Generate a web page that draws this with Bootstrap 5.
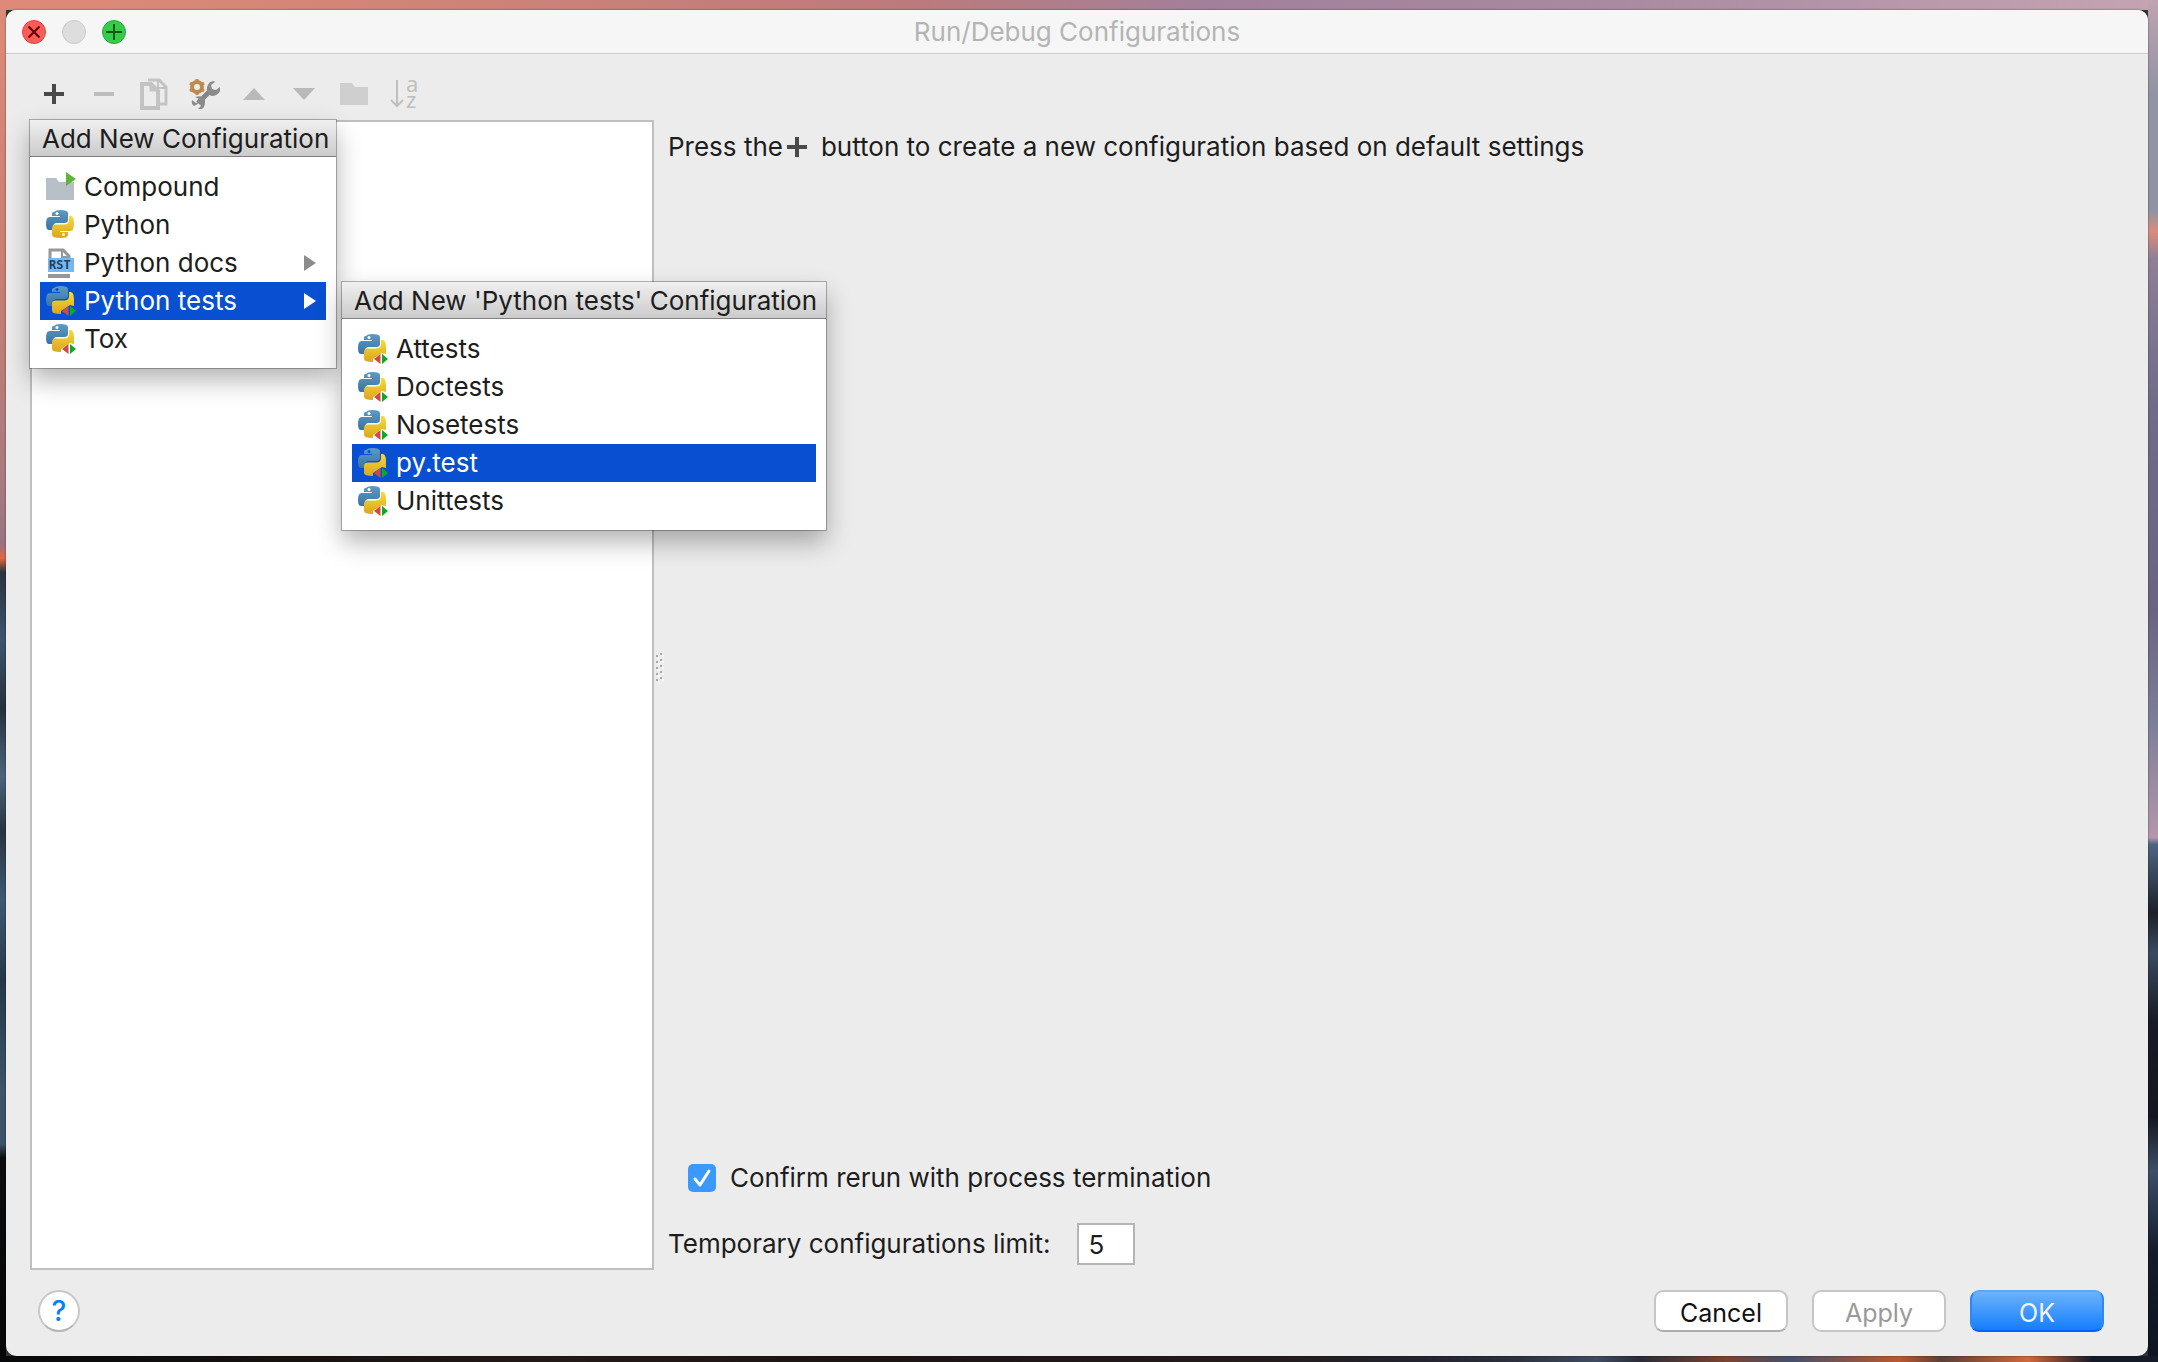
<!DOCTYPE html>
<html lang="en">
<head>
<meta charset="utf-8">
<meta name="viewport" content="width=device-width, initial-scale=1">
<title>Run/Debug Configurations</title>
<link href="https://cdn.jsdelivr.net/npm/bootstrap@5.3.0/dist/css/bootstrap.min.css" rel="stylesheet">
<style>
:root{--ui-text:#1d1d1d;--ui-line:#bfbfbf;--ui-select:#084fd1}
body{
  font-family:Inter,"Noto Sans",sans-serif;font-size:26px;line-height:30px;color:var(--ui-text);
  min-height:100vh;padding:10px 10px 6px 6px;
  background:
    linear-gradient(90deg,#08090c 0,#15110f 12%,#241a18 26%,#1c1514 40%,#241b1b 58%,#23242f 66%,#2c2f3c 70%,#3f4b60 74%,#2a2c38 76%,#7a4431 80%,#45506a 83%,#b9592f 88%,#5a4038 90%,#d0683c 94%,#141a28 97%) bottom/100% 6px no-repeat,
    linear-gradient(180deg,#df8a78 0,#c97f72 20%,#a67a80 36%,#9a7380 40%,#e0663f 41%,#2b3340 42%,#3c556c 47%,#26303c 52%,#4c647c 57%,#2a3340 61%,#3d5a72 66%,#26384a 72%,#3c5468 80%,#3c5468 84%,#0b0c0e 85%,#060606 100%) left/6px 100% no-repeat,
    linear-gradient(180deg,#c0a3b0 0,#9094a4 7%,#8f93a3 15.5%,#d98c7c 17%,#8d7f96 19%,#6f6b88 30%,#6a6482 45%,#7d7e98 53%,#b396ab 61.5%,#4d6480 62%,#3a4b60 64%,#1e2028 67%,#3a4a60 70%,#191b24 75%,#15171f 82%,#3c4e68 86%,#141b2a 92%,#0f1420 100%) right/10px 100% no-repeat,
    linear-gradient(90deg,#df8a78 0,#cf8478 20%,#bd7a7c 42%,#a2809a 56%,#a98aa0 75%,#c5a4b2 100%) top/100% 10px no-repeat,#333}
.app-window{background:#ececec;border-radius:10px;box-shadow:0 0 2px rgba(0,0,0,.6)}
.title-strip{height:44px;background:#f6f6f6;border-bottom:1px solid #cbcbcb;border-radius:10px 10px 0 0;padding:0 16px}
.window-title{font-size:26px;color:#b4b4b4;font-weight:400;line-height:30px}
.light{width:24px;height:24px;border:0;padding:0;background:none}
.light svg{display:block}
.lights{gap:16px;width:200px}
.tool-strip{padding:14px 24px 0;gap:2px;height:66px}
.tool-strip .tool-btn{width:48px;height:52px;border:0;padding:0;background:none;display:flex;align-items:center;justify-content:center}
.main-split{padding-left:24px}
.config-list{width:624px;background:#fff;border:2px solid var(--ui-line)}
.splitter{width:14px;padding-bottom:54px}
.popup{position:absolute;background:#fff;z-index:10;box-shadow:0 0 0 1px rgba(0,0,0,.28),0 12px 24px rgba(0,0,0,.3);color:var(--ui-text)}
.popup-main{top:-2px;left:-2px;width:306px;height:248px}
.popup-sub{top:0;left:calc(100% + 16px);width:484px;height:248px}
.popup-title{height:37px;padding-left:12px;line-height:38px;font-size:26px;font-weight:400;white-space:nowrap;background:linear-gradient(#f0f0f0,#cbcbcb);border-bottom:1px solid #7f7f7f}
.popup-items{padding:11px 10px 10px}
.popup-items>li{position:relative}
.entry{display:flex;align-items:center;height:38px;padding:0 10px 0 6px;color:inherit;text-decoration:none}
.entry>.entry-icon{width:30px;height:30px;margin-right:8px;flex:none}
.entry.chosen{background:var(--ui-select);color:#fff}
.pane{padding:12px 24px 5px 0}
.hint-plus{margin:0 14px 0 4px}
.confirm-row{padding-left:20px;gap:14px;margin-bottom:30px}
.confirm-row .form-check-input{width:28px;height:28px;margin:0;border:0;border-radius:5px}
.confirm-row .form-check-input:checked{background-color:#3b99fc;background-size:28px;background-image:url("data:image/svg+xml,%3Csvg xmlns='http://www.w3.org/2000/svg' viewBox='0 0 28 28'%3E%3Cpath d='M7 15l5 6L21 7' fill='none' stroke='%23fff' stroke-width='3' stroke-linecap='round' stroke-linejoin='round'/%3E%3C/svg%3E")}
.limit-row{gap:26px}
.limit-input{width:58px;height:42px;border:2px solid #b5b5b5;border-radius:0;padding:0 10px;font-size:26px;line-height:30px;color:#1d1d1d}
.foot{padding:20px 44px 24px 32px}
.help-btn{width:42px;height:42px;border-radius:50%;border:2px solid #c8c8c8;border-bottom-color:#b4b4b4;background:#fff;color:#0a7cff;font-size:28px;line-height:36px;padding:0;font-weight:500}
.foot-actions{gap:24px}
.dlg-btn{width:134px;height:42px;border-radius:9px;border:2px solid #c6c6c6;border-bottom-color:#adadad;background:#fff;font-size:25px;line-height:30px;padding:6px 0 2px;color:#111}
.dlg-btn:disabled{background:#fff;color:#9a9a9a;opacity:1;border-color:#c6c6c6}
.dlg-btn.go{color:#f3f3fa;border-color:#5aa8f8 #2f86f5 #0a60ff;background:linear-gradient(#6cb3fa,#147efe)}
</style>
</head>
<body class="d-flex flex-column">

<svg width="0" height="0" class="position-absolute" aria-hidden="true">
  <defs>
    <linearGradient id="blueFill" x1="0" y1="0" x2="0" y2="1"><stop offset="0" stop-color="#5b9bc4"/><stop offset="1" stop-color="#3b74a3"/></linearGradient>
    <linearGradient id="goldFill" x1="0" y1="0" x2="0" y2="1"><stop offset="0" stop-color="#f5dc35"/><stop offset="1" stop-color="#dba51f"/></linearGradient>
    <symbol id="py" viewBox="0 0 30 30">
      <path fill="url(#blueFill)" d="M9 1.500Q9.500 0 14 0Q22 0 22 3V10Q22 13 18 13H11Q7 13 7 17V20H3Q0 20 0 14Q0 7 3.500 7H14V6H6V3Q6 2 9 1.500Z"/>
      <path fill="url(#goldFill)" d="M23 6H25Q28 7 28 13Q28 20 25 21H14V22H22V25Q22 28 14.500 28Q6 28 6 25V18Q6 14.500 10 14.500H18Q23 14.500 23 10Z"/>
      <circle cx="11" cy="3.500" r="1.500" fill="#fff"/><circle cx="17.500" cy="24.500" r="1.500" fill="#fff" opacity=".85"/>
    </symbol>
    <symbol id="pytest" viewBox="0 0 30 30">
      <path fill="url(#blueFill)" d="M9 1.500Q9.500 0 14 0Q22 0 22 3V10Q22 13 18 13H11Q7 13 7 17V20H3Q0 20 0 14Q0 7 3.500 7H14V6H6V3Q6 2 9 1.500Z"/>
      <path fill="url(#goldFill)" d="M23 6H25Q28 7 28 13V20L24 19L15 25V28Q6 28 6 25V18Q6 14.500 10 14.500H18Q23 14.500 23 10Z"/>
      <circle class="eye" cx="11" cy="3.500" r="1.500" fill="currentColor"/>
      <path fill="#cf4a45" d="M22.500 20V30L16 25Z"/><path fill="#0aaa22" d="M24 20V30L30 25Z"/>
    </symbol>
  </defs>
</svg>

<main class="app-window d-flex flex-column flex-grow-1">
  <header class="title-strip d-flex align-items-center">
    <div class="lights d-flex">
      <button class="light" aria-label="Close"><svg width="24" height="24"><circle cx="12" cy="12" r="11.500" fill="#fc5b57" stroke="#e2443f"/><path d="M6.500 6.500l11 11M17.500 6.500l-11 11" stroke="#5e0605" stroke-width="2"/></svg></button>
      <button class="light" aria-label="Minimize" disabled><svg width="24" height="24"><circle cx="12" cy="12" r="11.500" fill="#dddddd" stroke="#cbcbcb"/></svg></button>
      <button class="light" aria-label="Zoom"><svg width="24" height="24"><circle cx="12" cy="12" r="11.500" fill="#35cc4b" stroke="#24ac35"/><path d="M12 4v16M4 12h16" stroke="#0a5a10" stroke-width="2"/></svg></button>
    </div>
    <h1 class="window-title flex-grow-1 text-center m-0">Run/Debug Configurations</h1>
    <div class="lights"></div>
  </header>

  <div class="tool-strip d-flex" role="toolbar" aria-label="Configurations">
    <button class="tool-btn" aria-label="Add"><svg width="20" height="20"><path d="M10 0v20M0 10h20" stroke="#4a4a4a" stroke-width="4"/></svg></button>
    <button class="tool-btn" aria-label="Remove" disabled><svg width="20" height="20"><path d="M0 10h20" stroke="#bdbdbd" stroke-width="4"/></svg></button>
    <button class="tool-btn" aria-label="Copy" disabled><svg width="28" height="32"><g fill="none" stroke="#c3c3c3" stroke-width="4"><path d="M2 6h9l7 7v17H2z"/><path d="M11 5v7h7" stroke-width="3"/><path d="M8 2h11l7 7v17h-6" stroke-width="3"/><path d="M18 2v8h8" stroke-width="2"/></g></svg></button>
    <button class="tool-btn" aria-label="Edit defaults"><svg width="32" height="32" viewBox="-1 0 32 32"><path d="M9 25L23 11" stroke="#858585" stroke-width="5"/><path fill="#8b8b8b" d="M25 3L21 4Q17 8 18 14L22 18Q29 18 31 13V9L27 12L23 11L22 7L26 4ZM3 22L7 25L10 24L10 21L6 19Q12 17 16 20L16 24Q16 29 13 31H9L12 28L10 25L7 27L5 28Q2 26 3 22Z"/><circle cx="8" cy="9" r="5" fill="none" stroke="#bd8b4b" stroke-width="4"/><path d="M8 1v3M8 14v3M1 5l3 2M12 11l3 2M1 13l3-2M12 7l3-2" stroke="#bd8b4b" stroke-width="3"/></svg></button>
    <button class="tool-btn" aria-label="Move up" disabled><svg width="22" height="12"><path d="M11 0l11 12H0z" fill="#b9b9b9"/></svg></button>
    <button class="tool-btn" aria-label="Move down" disabled><svg width="22" height="12"><path d="M11 12L0 0h22z" fill="#b9b9b9"/></svg></button>
    <button class="tool-btn" aria-label="New folder" disabled><svg width="28" height="24"><path d="M0 1h12l3 4h13v18H0z" fill="#cfcfcf"/></svg></button>
    <button class="tool-btn" aria-label="Sort" disabled><svg class="overflow-visible" width="28" height="32"><path d="M7 2v26M1 22l6 6 6-6" fill="none" stroke="#bfbfbf" stroke-width="2"/><g fill="#bfbfbf" font-family="Noto Sans,sans-serif" font-size="22"><text x="16" y="14">a</text><text x="16" y="30">z</text></g></svg></button>
  </div>

  <div class="main-split d-flex flex-grow-1">
    <aside class="config-list position-relative flex-shrink-0">
      <section class="popup popup-main">
        <h2 class="popup-title m-0">Add New Configuration</h2>
        <ul class="popup-items list-unstyled m-0">
          <li><a class="entry" href="#"><svg class="entry-icon"><path d="M0 6h10l3 4h15v18H0z" fill="#b7bfc7"/><path d="M20 0v14l10-7z" fill="#5fb53c"/></svg>Compound</a></li>
          <li><a class="entry" href="#"><svg class="entry-icon"><use href="#py"/></svg>Python</a></li>
          <li><a class="entry" href="#"><svg class="entry-icon"><path d="M4 11V2h13l6 6v3" fill="none" stroke="#979797" stroke-width="3"/><path d="M16 2v7h8" fill="none" stroke="#979797" stroke-width="2"/><path d="M2 10h26v14H2z" fill="#74b9f2"/><path d="M2 26h22v4H2z" fill="#979797"/><text x="3" y="21" font-size="12" font-weight="700" font-family="DejaVu Sans Mono,monospace" fill="#24405c">RST</text></svg>Python docs<svg class="ms-auto" width="12" height="16"><path d="M0 0l12 8-12 8z" fill="#8c8c8c"/></svg></a></li>
          <li><a class="entry chosen" href="#" aria-expanded="true"><svg class="entry-icon" color="#084fd1"><use href="#pytest"/></svg>Python tests<svg class="ms-auto" width="12" height="16"><path d="M0 0l12 8-12 8z" fill="#fff"/></svg></a>
            <section class="popup popup-sub">
              <h2 class="popup-title m-0">Add New 'Python tests' Configuration</h2>
              <ul class="popup-items list-unstyled m-0">
                <li><a class="entry" href="#"><svg class="entry-icon" color="#fff"><use href="#pytest"/></svg>Attests</a></li>
                <li><a class="entry" href="#"><svg class="entry-icon" color="#fff"><use href="#pytest"/></svg>Doctests</a></li>
                <li><a class="entry" href="#"><svg class="entry-icon" color="#fff"><use href="#pytest"/></svg>Nosetests</a></li>
                <li><a class="entry chosen" href="#"><svg class="entry-icon" color="#084fd1"><use href="#pytest"/></svg>py.test</a></li>
                <li><a class="entry" href="#"><svg class="entry-icon" color="#fff"><use href="#pytest"/></svg>Unittests</a></li>
              </ul>
            </section>
          </li>
          <li><a class="entry" href="#"><svg class="entry-icon" color="#fff"><use href="#pytest"/></svg>Tox</a></li>
        </ul>
      </section>
    </aside>
    <div class="splitter d-flex align-items-center flex-shrink-0" role="separator" aria-orientation="vertical">
      <svg width="12" height="34"><g fill="#fafafa"><path d="M4 6h2v2h-2zM4 12h2v2h-2zM4 18h2v2h-2zM4 24h2v2h-2zM4 30h2v2h-2zM8 4h2v2h-2zM8 10h2v2h-2zM8 16h2v2h-2zM8 22h2v2h-2zM8 28h2v2h-2z"/></g><g fill="#a8a8a8"><path d="M2 4h2v2h-2zM2 10h2v2h-2zM2 16h2v2h-2zM2 22h2v2h-2zM2 28h2v2h-2zM6 2h2v2h-2zM6 8h2v2h-2zM6 14h2v2h-2zM6 20h2v2h-2zM6 26h2v2h-2z"/></g></svg>
    </div>
    <section class="pane d-flex flex-column flex-grow-1">
      <p class="d-flex align-items-center m-0">Press the<svg class="hint-plus" width="20" height="20" role="img" aria-label="plus"><path d="M10 0v20M0 10h20" stroke="#4a4a4a" stroke-width="4"/></svg>button to create a new configuration based on default settings</p>
      <div class="confirm-row d-flex align-items-center mt-auto">
        <input class="form-check-input" type="checkbox" id="confirm" checked>
        <label for="confirm">Confirm rerun with process termination</label>
      </div>
      <div class="limit-row d-flex align-items-center">
        <label for="limit">Temporary configurations limit:</label>
        <input class="limit-input" type="text" id="limit" value="5">
      </div>
    </section>
  </div>

  <footer class="foot d-flex align-items-center justify-content-between">
    <button class="help-btn" aria-label="Help">?</button>
    <div class="foot-actions d-flex">
      <button class="dlg-btn">Cancel</button>
      <button class="dlg-btn" disabled>Apply</button>
      <button class="dlg-btn go">OK</button>
    </div>
  </footer>
</main>
<script src="https://cdn.jsdelivr.net/npm/bootstrap@5.3.0/dist/js/bootstrap.bundle.min.js"></script>
</body>
</html>
